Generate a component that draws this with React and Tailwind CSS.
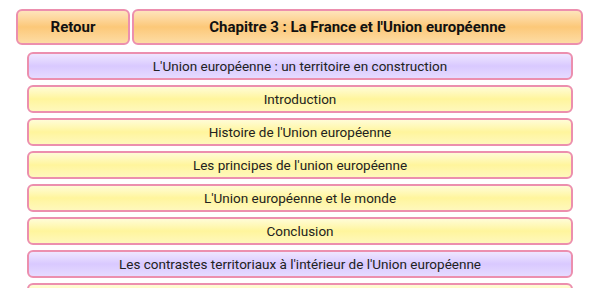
const rows = [
  { label: "L'Union européenne : un territoire en construction", kind: 'section' },
  { label: 'Introduction', kind: 'item' },
  { label: "Histoire de l'Union européenne", kind: 'item' },
  { label: "Les principes de l'union européenne", kind: 'item' },
  { label: "L'Union européenne et le monde", kind: 'item' },
  { label: 'Conclusion', kind: 'item' },
  { label: "Les contrastes territoriaux à l'intérieur de l'Union européenne", kind: 'section' },
  // next row is scrolled below the fold, only its top edge shows
  { label: '', kind: 'item' },
]

function Row({ label, kind }) {
  const bg =
    kind === 'section'
      ? 'bg-gradient-to-b from-[#efe6ff] via-[#d9c9ff] to-[#e6dbff]'
      : 'bg-gradient-to-b from-[#fffcd6] via-[#fff59c] to-[#fff8bc]'
  return (
    <div
      className={`h-[28px] shrink-0 flex items-center justify-center pt-[1px] rounded-[6px] border-2 border-[#ec8fae] text-[13.5px] text-[#222] ${bg}`}
    >
      {label}
    </div>
  )
}

export default function App() {
  return (
    <div
      className="w-[600px] h-[300px] overflow-hidden bg-white"
      style={{ fontFamily: 'Roboto, "Liberation Sans", sans-serif' }}
    >
      {/* header */}
      <div className="flex gap-[2px] pl-[16px] pr-[17px] pt-[9px]">
        <button className="w-[114px] h-[36px] rounded-[6px] border-2 border-[#ec8fae] bg-gradient-to-b from-[#fee4bb] via-[#fcc878] to-[#fddca4] font-bold text-[15px] text-[#111]">
          Retour
        </button>
        <button className="flex-1 h-[36px] rounded-[6px] border-2 border-[#ec8fae] bg-gradient-to-b from-[#fee4bb] via-[#fcc878] to-[#fddca4] font-bold text-[15px] text-[#111]">
          Chapitre 3 : La France et l'Union européenne
        </button>
      </div>

      {/* list, clipped at the bottom of the scroll area */}
      <div className="h-[243px] overflow-hidden flex flex-col gap-[5px] px-[27px] pt-[7px]">
        {rows.map((r, i) => (
          <Row key={i} {...r} />
        ))}
      </div>
    </div>
  )
}
